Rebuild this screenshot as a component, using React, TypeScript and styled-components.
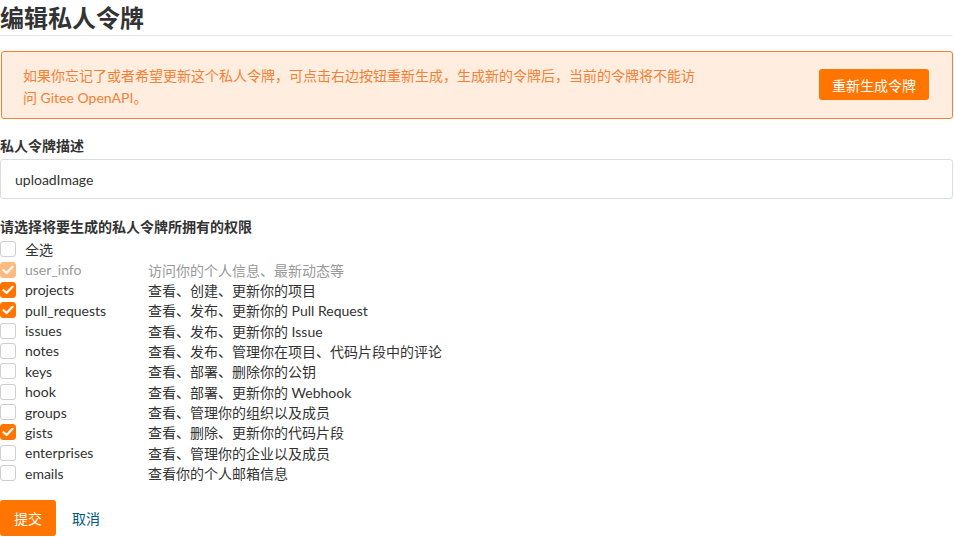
import React from "react";
import styled, { createGlobalStyle } from "styled-components";

const Global = createGlobalStyle`
  html, body { margin: 0; padding: 0; background: #fff; }
  body {
    font-family: Lato, "Noto Sans CJK SC", sans-serif;
    font-size: 14px;
    color: #333;
  }
  * { box-sizing: border-box; }
`;

const Page = styled.div`
  width: 954px;
  padding: 0 1px 0 0;
  display: flex;
  flex-direction: column;
`;

const Title = styled.h1`
  margin: 0;
  padding-top: 1px;
  font-size: 24px;
  line-height: 34px;
  font-weight: 700;
  color: #333;
  border-bottom: 1px solid #e6e6e6;
`;

const Alert = styled.div`
  margin: 15px 0 0 1px;
  height: 68px;
  border: 1px solid #f47f35;
  border-radius: 3px;
  background: #ffeedf;
  display: flex;
  justify-content: space-between;
  padding: 13px 23px 8px 21px;
`;

const AlertText = styled.div`
  width: 676px;
  color: #f47f35;
  line-height: 22px;
  font-size: 14px;
`;

const OrangeButton = styled.button<{ $h: number; $px: number }>`
  height: ${(p) => p.$h}px;
  padding: 0 ${(p) => p.$px}px;
  background: #ff7500;
  color: #fff;
  border: none;
  border-radius: 3px;
  font-family: Lato, "Noto Sans CJK SC", sans-serif;
  font-size: 14px;
  cursor: pointer;
  flex-shrink: 0;
`;

const RegenButton = styled(OrangeButton)`
  margin-top: 4px;
  width: 110px;
`;

const Label = styled.div<{ $mt: number }>`
  margin-top: ${(p) => p.$mt}px;
  font-weight: 700;
  font-size: 14px;
  line-height: 20px;
  color: #333;
`;

const Input = styled.div`
  margin-top: 3px;
  height: 40px;
  border: 1px solid #dcdde1;
  border-radius: 3px;
  padding: 0 14px;
  display: flex;
  align-items: center;
  font-size: 14px;
  color: #333;
`;

const List = styled.div`
  margin-top: 2px;
  display: flex;
  flex-direction: column;
`;

const Row = styled.div`
  height: 20.36px;
  display: flex;
  align-items: center;
`;

const Box = styled.span<{ $checked: boolean; $disabled: boolean }>`
  width: 16px;
  height: 16px;
  border-radius: 3px;
  flex-shrink: 0;
  display: flex;
  align-items: center;
  justify-content: center;
  background: ${(p) =>
    p.$checked ? (p.$disabled ? "#ffba80" : "#ff7500") : "#fff"};
  border: 1px solid
    ${(p) => (p.$checked ? (p.$disabled ? "#ffba80" : "#ff7500") : "#cfcfcf")};
`;

const Name = styled.span<{ $disabled: boolean }>`
  margin-left: 9px;
  width: 123px;
  color: ${(p) => (p.$disabled ? "#999" : "#333")};
`;

const Desc = styled.span<{ $disabled: boolean }>`
  color: ${(p) => (p.$disabled ? "#999" : "#333")};
`;

const Actions = styled.div`
  margin-top: 17px;
  display: flex;
  align-items: center;
  gap: 16px;
`;

const Cancel = styled.a`
  color: #005980;
  font-size: 14px;
  text-decoration: none;
  cursor: pointer;
`;

const Check = () => (
  <svg width="12" height="10" viewBox="0 0 12 10">
    <path
      d="M1.5 5.2 L4.6 8 L10.5 1.8"
      fill="none"
      stroke="#fff"
      strokeWidth="2.2"
      strokeLinecap="round"
      strokeLinejoin="round"
    />
  </svg>
);

type Perm = { name: string; desc?: string; checked: boolean; disabled?: boolean };

const perms: Perm[] = [
  { name: "全选", checked: false },
  { name: "user_info", desc: "访问你的个人信息、最新动态等", checked: true, disabled: true },
  { name: "projects", desc: "查看、创建、更新你的项目", checked: true },
  { name: "pull_requests", desc: "查看、发布、更新你的 Pull Request", checked: true },
  { name: "issues", desc: "查看、发布、更新你的 Issue", checked: false },
  { name: "notes", desc: "查看、发布、管理你在项目、代码片段中的评论", checked: false },
  { name: "keys", desc: "查看、部署、删除你的公钥", checked: false },
  { name: "hook", desc: "查看、部署、更新你的 Webhook", checked: false },
  { name: "groups", desc: "查看、管理你的组织以及成员", checked: false },
  { name: "gists", desc: "查看、删除、更新你的代码片段", checked: true },
  { name: "enterprises", desc: "查看、管理你的企业以及成员", checked: false },
  { name: "emails", desc: "查看你的个人邮箱信息", checked: false },
];

export default function App() {
  return (
    <Page>
      <Global />
      <Title>编辑私人令牌</Title>
      <Alert>
        <AlertText>
          如果你忘记了或者希望更新这个私人令牌，可点击右边按钮重新生成，生成新的令牌后，当前的令牌将不能访问 Gitee OpenAPI。
        </AlertText>
        <RegenButton $h={31} $px={13}>重新生成令牌</RegenButton>
      </Alert>
      <Label $mt={17}>私人令牌描述</Label>
      <Input>uploadImage</Input>
      <Label $mt={18}>请选择将要生成的私人令牌所拥有的权限</Label>
      <List>
        {perms.map((p) => (
          <Row key={p.name}>
            <Box $checked={p.checked} $disabled={!!p.disabled}>
              {p.checked && <Check />}
            </Box>
            <Name $disabled={!!p.disabled}>{p.name}</Name>
            {p.desc && <Desc $disabled={!!p.disabled}>{p.desc}</Desc>}
          </Row>
        ))}
      </List>
      <Actions>
        <OrangeButton $h={36} $px={14}>提交</OrangeButton>
        <Cancel>取消</Cancel>
      </Actions>
    </Page>
  );
}
